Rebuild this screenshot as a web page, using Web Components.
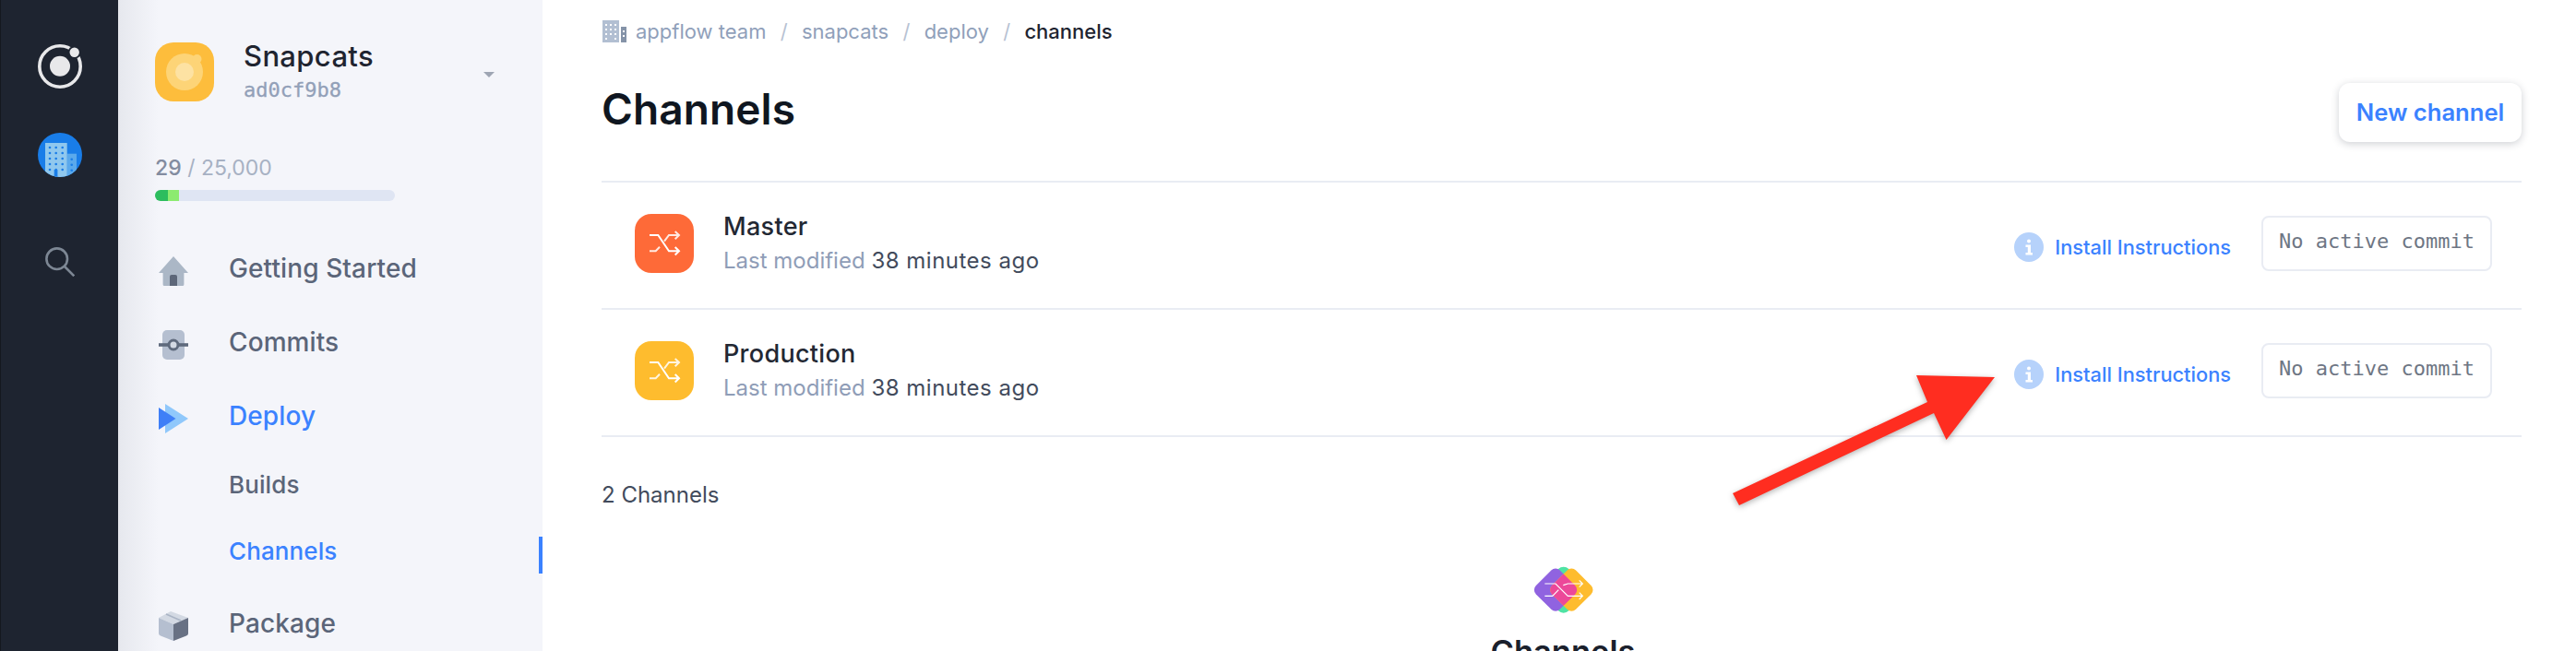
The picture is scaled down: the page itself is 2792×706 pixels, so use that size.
<!DOCTYPE html>
<html>
<head>
<meta charset="utf-8">
<title>Channels</title>
<style>
  html, body { margin: 0; height: 706px; overflow: hidden; background: #fff; }
  body { font-family: Inter, "Noto Sans", sans-serif; position: relative; }
  app-shell { height: 706px; }
</style>
</head>
<body>
<app-shell>
  <app-rail slot="rail"></app-rail>
  <app-sidebar slot="sidebar"></app-sidebar>
  <channels-page></channels-page>
</app-shell>
<note-arrow></note-arrow>

<script>
const icons = {
  home: `<svg width="32" height="32" viewBox="0 0 32 32"><path d="M16 0 32 18h-4.6v12.5a1.5 1.5 0 0 1-1.5 1.5H6.100a1.500 1.500 0 0 1-1.500-1.500V18H0z" fill="#abb7c6"/><path d="M12 22a2 2 0 0 1 2-2h4a2 2 0 0 1 2 2v10h-8z" fill="#5d6779"/></svg>`,
  commits: `<svg width="32" height="32" viewBox="0 0 32 32"><rect x="4" width="24" height="32" rx="5" fill="#b5bfd0"/><rect y="14.200" width="32" height="3.600" fill="#5f6a7d"/><circle cx="16" cy="16" r="5" fill="#d3d9e3" stroke="#5f6a7d" stroke-width="3"/></svg>`,
  deploy: `<svg width="32" height="32" viewBox="0 0 32 32"><path d="M7 0 32 16 7 32z" fill="#90c8fb"/><path d="M0 4 18.500 16 0 28z" fill="#3f7ff7"/></svg>`,
  package: `<svg width="32" height="32" viewBox="0 0 32 32"><path d="M13 0 32 7 16 14 0 7z" fill="#d3d9e3"/><path d="M0 7 16 14V32L2 26.500Q0 25.700 0 24z" fill="#b5bfd0"/><path d="M32 7 16 14V32L30 26.500Q32 25.700 32 24z" fill="#687184"/><path d="M8 3 24 10" stroke="#aab4c5" stroke-width="1.500"/></svg>`,
  building: `<svg width="26" height="24" viewBox="0 0 26 24"><rect width="18" height="24" fill="#b2bfd2"/><g fill="#fff"><rect x="3" y="4" width="2" height="2"/><rect x="8" y="4" width="2" height="2"/><rect x="13" y="4" width="2" height="2"/><rect x="3" y="9" width="2" height="2"/><rect x="8" y="9" width="2" height="2"/><rect x="13" y="9" width="2" height="2"/><rect x="3" y="14" width="2" height="2"/><rect x="8" y="14" width="2" height="2"/><rect x="13" y="14" width="2" height="2"/><rect x="3" y="19" width="2" height="2"/><rect x="13" y="19" width="2" height="2"/></g><rect x="20" y="7" width="6" height="17" fill="#8593a8"/><g fill="#fff"><rect x="22" y="11" width="2" height="2"/><rect x="22" y="16" width="2" height="2"/></g></svg>`,
  shuffle: `<svg width="64" height="64" viewBox="0 0 64 64" fill="none" stroke="#fff" stroke-width="2"><path d="M16 23h9.300L37 40.300H48M43.700 36 48 40.300 43.700 44.500"/><path d="M16 40.300h6.700L27 35.700M32 29.700 37 23H48M43.700 19 48 23 43.700 27.300" stroke-opacity=".85"/></svg>`,
  info: `<svg width="32" height="32" viewBox="0 0 32 32"><circle cx="16" cy="16" r="16" fill="#b6d2fb"/><g fill="#fff"><circle cx="16" cy="9.500" r="2"/><path d="M12.500 13.500H18V22H20V24.500H12.500V22H14.800V16H12.500z"/></g></svg>`
};

class AppShell extends HTMLElement {
  constructor() {
    super();
    this.attachShadow({ mode: 'open' }).innerHTML = `
      <style>
        :host { display: flex; width: 100%; overflow: hidden; }
      </style>
      <slot name="rail"></slot>
      <slot name="sidebar"></slot>
      <slot></slot>
    `;
  }
}

class AppRail extends HTMLElement {
  constructor() {
    super();
    this.attachShadow({ mode: 'open' }).innerHTML = `
      <style>
        :host {
          display: flex;
          flex-direction: column;
          align-items: center;
          flex: none;
          box-sizing: border-box;
          width: 128px;
          height: 706px;
          padding-top: 48px;
          background: #1e2430;
          border-left: 1px solid #14181f;
        }
        svg { display: block; }
        .team { margin-top: 48px; }
        .search { margin-top: 76px; }
      </style>
      <svg width="48" height="48" viewBox="0 0 48 48">
        <circle cx="24" cy="24" r="22.200" fill="none" stroke="#e8e8ea" stroke-width="3.600"/>
        <circle cx="24" cy="23.800" r="11" fill="#e8e8ea"/>
        <circle cx="39.700" cy="8.700" r="7" fill="#1e2430"/>
        <circle cx="39.700" cy="8.700" r="5.200" fill="#e8e8ea"/>
      </svg>
      <svg class="team" width="48" height="48" viewBox="0 0 48 48">
        <defs><clipPath id="c"><circle cx="24" cy="24" r="24"/></clipPath></defs>
        <circle cx="24" cy="24" r="24" fill="#197de8"/>
        <g clip-path="url(#c)">
          <rect x="31.700" y="22.700" width="10.300" height="26" fill="#5aa9ec"/>
          <rect x="8" y="11" width="23.700" height="37" fill="#90c8ee"/>
          <g fill="#197de8">
            ${[16, 22, 28, 34, 40].map(y => [13, 19.7, 26.7].map(x => `<circle cx="${x}" cy="${y}" r="1.300"/>`).join('')).join('')}
            <circle cx="36.700" cy="28.700" r="1.300"/><circle cx="36.700" cy="34.700" r="1.300"/><circle cx="36.700" cy="40.700" r="1.300"/>
            <rect x="17.700" y="40" width="3.700" height="8"/>
          </g>
        </g>
      </svg>
      <svg class="search" width="32" height="32" viewBox="0 0 32 32" fill="none" stroke="#7d8794" stroke-width="2.600">
        <circle cx="12.700" cy="12.700" r="11.300"/>
        <path d="M21 21 31.300 31.300"/>
      </svg>
    `;
  }
}

class UsageMeter extends HTMLElement {
  constructor() {
    super();
    this.attachShadow({ mode: 'open' }).innerHTML = `
      <style>
        :host { display: block; width: 260px; }
        .label { font-size: 23px; line-height: 30px; color: #a7b1c3; }
        .label b { font-weight: 500; color: #838ca0; }
        .bar {
          display: flex;
          height: 12px;
          margin-top: 9px;
          border-radius: 6px;
          overflow: hidden;
          background: #dfe5f3;
        }
        .bar i:first-child { width: 14px; background: #2dbd5e; }
        .bar i:last-child { width: 12px; background: #8ceb70; }
      </style>
      <div class="label"><b>29</b> / 25,000</div>
      <div class="bar"><i></i><i></i></div>
    `;
  }
}

class NavItem extends HTMLElement {
  constructor() {
    super();
    const sub = this.hasAttribute('sub');
    const active = this.hasAttribute('active');
    const icon = this.getAttribute('icon');
    this.attachShadow({ mode: 'open' }).innerHTML = `
      <style>
        :host {
          display: flex;
          align-items: center;
          gap: 44px;
          position: relative;
          height: ${sub ? 72 : 80}px;
          padding-left: ${sub ? 120 : 44}px;
          font-size: ${sub ? 26 : 28}px;
          font-weight: 500;
          color: ${active ? '#3b82ff' : '#5b6579'};
        }
        svg { display: block; }
        .label { margin-bottom: ${sub ? 4 : 6}px; letter-spacing: .1px; }
        .mark {
          position: absolute;
          right: 0;
          top: 19px;
          width: 4px;
          height: 40px;
          background: #3b82ff;
        }
      </style>
      ${icon ? icons[icon] : ''}
      <span class="label"><slot></slot></span>
      ${sub && active ? '<span class="mark"></span>' : ''}
    `;
  }
}

class AppSidebar extends HTMLElement {
  constructor() {
    super();
    this.attachShadow({ mode: 'open' }).innerHTML = `
      <style>
        :host {
          display: block;
          flex: none;
          box-sizing: border-box;
          width: 460px;
          height: 706px;
          padding-top: 46px;
          background: linear-gradient(90deg, #e6e8ee 0, #f4f5fa 44px);
        }
        .app { display: flex; align-items: flex-start; height: 64px; padding-left: 40px; position: relative; }
        .logo { display: block; }
        .names { margin: -3px 0 0 32px; }
        .name { font-size: 31px; line-height: 36px; font-weight: 500; letter-spacing: .35px; color: #1f2430; }
        .hash { margin-top: 6px; font: 22px/26px "DejaVu Sans Mono", monospace; -webkit-text-stroke: .3px #92a0b8; color: #92a0b8; }
        .caret {
          position: absolute;
          left: 396px;
          top: 32px;
          width: 0;
          height: 0;
          border: 6px solid transparent;
          border-top-color: #9ea5b3;
          border-bottom: 0;
        }
        usage-meter { margin: 57px 0 0 40px; }
        nav { display: block; margin-top: 36px; }
        .subs { margin: -3px 0 4px; }
      </style>
      <div class="app">
        <svg class="logo" width="64" height="64" viewBox="0 0 64 64">
          <rect width="64" height="64" rx="20" fill="#fdbd3c"/>
          <circle cx="32" cy="32" r="20" fill="#fdd477"/>
          <circle cx="32" cy="32" r="10" fill="#fde2a3"/>
          <circle cx="45.500" cy="18" r="5" fill="#fdd477"/>
        </svg>
        <div class="names">
          <div class="name">Snapcats</div>
          <div class="hash">ad0cf9b8</div>
        </div>
        <span class="caret"></span>
      </div>
      <usage-meter></usage-meter>
      <nav>
        <nav-item icon="home">Getting Started</nav-item>
        <nav-item icon="commits">Commits</nav-item>
        <nav-item icon="deploy" active>Deploy</nav-item>
        <div class="subs">
          <nav-item sub>Builds</nav-item>
          <nav-item sub active>Channels</nav-item>
        </div>
        <nav-item icon="package">Package</nav-item>
      </nav>
    `;
  }
}

class CrumbTrail extends HTMLElement {
  constructor() {
    super();
    const parts = this.getAttribute('path').split(',');
    const last = parts.length - 1;
    this.attachShadow({ mode: 'open' }).innerHTML = `
      <style>
        :host {
          display: flex;
          align-items: center;
          height: 32px;
          font-size: 22px;
          color: #90a0ba;
        }
        svg { display: block; margin: 0 10px 0 1px; }
        .sep { margin: 0 15.300px; color: #b7c2d3; }
        .now { color: #1e2430; font-weight: 500; }
      </style>
      ${icons.building}
      ${parts.map((p, i) => i === last
        ? `<span class="now">${p}</span>`
        : `<span>${p}</span><span class="sep">/</span>`).join('')}
    `;
  }
}

class ChannelRow extends HTMLElement {
  constructor() {
    super();
    const color = this.getAttribute('color');
    this.attachShadow({ mode: 'open' }).innerHTML = `
      <style>
        :host {
          display: flex;
          align-items: flex-start;
          box-sizing: border-box;
          height: 138px;
          padding: 34px 32px 0 36px;
          border-top: 2px solid #e9ecf3;
        }
        .badge { flex: none; width: 64px; height: 64px; border-radius: 18px; background: ${color}; }
        .badge svg { display: block; }
        .text { margin: -3px 0 0 32px; flex: 1; }
        .title { font-size: 27px; line-height: 34px; font-weight: 500; letter-spacing: .3px; color: #232833; }
        .meta { margin-top: 4px; font-size: 24px; line-height: 32px; color: #8f9db7; }
        .meta span { color: #424b5c; letter-spacing: .5px; }
        .install {
          display: flex;
          align-items: center;
          gap: 12px;
          margin-top: 20px;
          font-size: 21.800px;
          font-weight: 500;
          color: #3b82ff;
        }
        .install svg { display: block; }
        .commit {
          box-sizing: border-box;
          width: 250px;
          height: 60px;
          margin: 2px 0 0 33px;
          padding-bottom: 5px;
          display: flex;
          align-items: center;
          justify-content: center;
          border: 2px solid #e9ecf3;
          border-radius: 8px;
          font: 22px "DejaVu Sans Mono", monospace;
          color: #6e7684;
        }
      </style>
      <div class="badge">${icons.shuffle}</div>
      <div class="text">
        <div class="title"><slot></slot></div>
        <div class="meta">Last modified <span>38 minutes ago</span></div>
      </div>
      <div class="install">${icons.info}Install Instructions</div>
      <div class="commit">No active commit</div>
    `;
  }
}

class EmptyState extends HTMLElement {
  constructor() {
    super();
    this.attachShadow({ mode: 'open' }).innerHTML = `
      <style>
        :host { display: flex; flex-direction: column; align-items: center; margin-top: 60px; padding-left: 3px; }
        svg { display: block; }
        h2 { margin: 19px 0 0; font-size: 34.500px; line-height: 44px; font-weight: 600; color: #1a202c; }
      </style>
      <svg width="66.670" height="53.330" viewBox="180 40 200 160" fill="none">
        <defs>
          <clipPath id="y"><rect x="252" y="65" width="110" height="110" rx="20" transform="rotate(45 307 120)"/></clipPath>
        </defs>
        <rect x="221" y="60" width="120" height="120" rx="24" transform="rotate(45 281 120)" fill="#4fe3a4"/>
        <rect x="200" y="65" width="110" height="110" rx="20" transform="rotate(45 255 120)" fill="#9063e0"/>
        <rect x="252" y="65" width="110" height="110" rx="20" transform="rotate(45 307 120)" fill="#febc2e"/>
        <g clip-path="url(#y)"><rect x="200" y="65" width="110" height="110" rx="20" transform="rotate(45 255 120)" fill="#ec4899"/></g>
        <g stroke="#fff" stroke-width="3.500">
          <path d="M220 100h35l40 40h48M332 129l11 11-11 11"/>
          <path d="M220 140h25l20-20M280 105l15-5h48M332 89l11 11-11 11"/>
        </g>
      </svg>
      <h2>Channels</h2>
    `;
  }
}

class ChannelsPage extends HTMLElement {
  constructor() {
    super();
    this.attachShadow({ mode: 'open' }).innerHTML = `
      <style>
        :host {
          display: block;
          flex: 1;
          min-width: 0;
          height: 706px;
          overflow: hidden;
          box-sizing: border-box;
          padding: 18px 59px 0 64px;
        }
        .head {
          display: flex;
          align-items: center;
          justify-content: space-between;
          height: 64px;
          margin: 40px 0 42px;
        }
        h1 { margin: 0 0 8px; font-size: 46px; line-height: 56px; font-weight: 600; letter-spacing: .1px; color: #0f1620; }
        button {
          box-sizing: border-box;
          width: 198px;
          height: 64px;
          padding: 0 0 2px;
          border: 0;
          border-radius: 12px;
          background: #fff;
          box-shadow: 0 2px 8px rgba(30, 40, 60, .22);
          font: 600 25.600px Inter, sans-serif;
          color: #3b82ff;
        }
        .rows { border-bottom: 2px solid #e9ecf3; }
        .count { margin: 47px 0 0; font-size: 24px; line-height: 32px; color: #424b5c; }
      </style>
      <crumb-trail path="appflow team,snapcats,deploy,channels"></crumb-trail>
      <div class="head">
        <h1>Channels</h1>
        <button>New channel</button>
      </div>
      <div class="rows">
        <channel-row color="#fe6a38">Master</channel-row>
        <channel-row color="#febc2e">Production</channel-row>
      </div>
      <div class="count">2 Channels</div>
      <empty-state></empty-state>
    `;
  }
}

// red callout sits on top of everything, so it gets absolute placement
class NoteArrow extends HTMLElement {
  constructor() {
    super();
    this.attachShadow({ mode: 'open' }).innerHTML = `
      <style>
        :host { position: absolute; left: 1870px; top: 400px; width: 300px; height: 160px; }
        svg { display: block; overflow: visible; filter: drop-shadow(0 2px 3px rgba(0,0,0,.3)); }
      </style>
      <svg width="300" height="160" viewBox="0 0 300 160">
        <path d="M8 135 219 36 207 7 292 9 239.500 77 226 48 15 148z" fill="#ff2d20"/>
      </svg>
    `;
  }
}

customElements.define('usage-meter', UsageMeter);
customElements.define('nav-item', NavItem);
customElements.define('app-rail', AppRail);
customElements.define('app-sidebar', AppSidebar);
customElements.define('crumb-trail', CrumbTrail);
customElements.define('channel-row', ChannelRow);
customElements.define('empty-state', EmptyState);
customElements.define('channels-page', ChannelsPage);
customElements.define('note-arrow', NoteArrow);
customElements.define('app-shell', AppShell);
</script>
</body>
</html>
